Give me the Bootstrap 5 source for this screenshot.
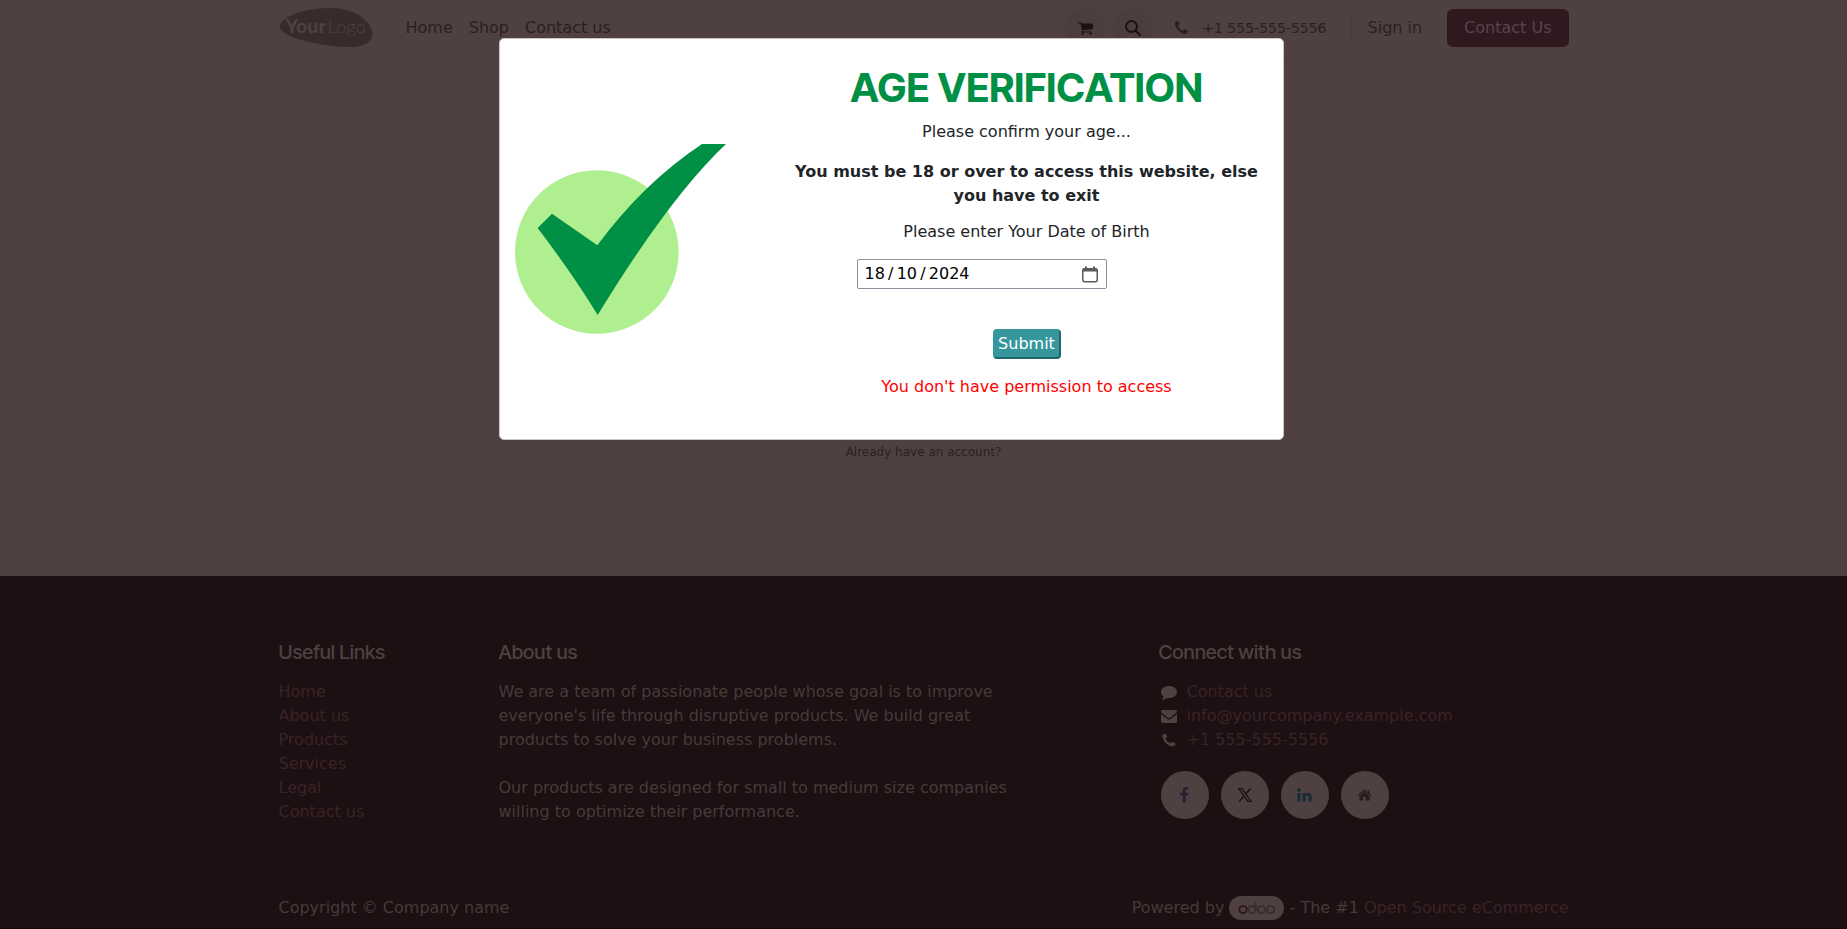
<!DOCTYPE html>
<html lang="en-GB">
<head>
<meta charset="utf-8">
<meta name="viewport" content="width=device-width, initial-scale=1">
<title>Age Verification</title>
<link href="https://cdn.jsdelivr.net/npm/bootstrap@5.3.0/dist/css/bootstrap.min.css" rel="stylesheet">
<style>
  :root { --page: #4f4141; --ink: #2d1e20; --foot: #1c1012; --foot-link: #3a2328; --foot-text: #483a3b; }
  body { font-family: "DejaVu Sans", sans-serif; background: var(--page); color: var(--ink); }
  .container { --bs-gutter-x: 30px; }
  .row { --bs-gutter-x: 30px; }
  a { text-decoration: none; }
  svg { display: block; }
  .site-header { border-bottom: 1px solid #4b3d3e; }
  .site-header .navbar { min-height: 56px; padding: 0; }
  .site-header .nav-link { color: var(--ink); padding: 8px; }
  .logo { width: 95px; height: 40px; }
  .round-btn { width: 40px; height: 40px; background: #4c3e3f; color: #1c1012; border: 0; }
  .phone { font-size: 14px; color: var(--ink); }
  .phone svg { margin-left: 6px; margin-right: 14px; }
  .btn-signin { color: var(--ink); border-color: #4b3d3e; --bs-btn-padding-x: 16px; }
  .btn-contact { background: #30181f; color: #57454a; --bs-btn-padding-x: 16px; }
  .account-link { font-size: 12px; color: var(--ink); }
  main { padding-bottom: 115px; }
  .site-footer { background: var(--foot); color: var(--foot-text); }
  .site-footer a { color: var(--foot-link); }
  .footer-main { padding-top: 64px; padding-bottom: 56px; }
  .site-footer h5 { font-family: "Inter Tight", "Inter Display", Inter, sans-serif; font-variation-settings: "opsz" 32; font-size: 20px; line-height: 24px; margin-bottom: 16px; color: #4f4141; }
  .contact-list svg { color: #4f4141; width: 20px; }
  .social { gap: 12px; margin-left: 2px; padding-top: 19px; }
  .social a { width: 48px; height: 48px; background: var(--page); }
  .copyright { border-bottom: 1px solid #120a0b; }
  .odoo { background: var(--page); width: 55px; height: 24px; }
  .age-overlay { position: absolute; top: 38px; left: 0; right: 64px; }
  .age-box { width: 785px; max-width: 100%; min-height: 402px; border: 1px solid #cac6c6; border-radius: 5px; background: #fff; color: #212529; }
  .age-art { width: 270px; padding-left: 15px; }
  .age-form { padding-top: 25px; }
  .age-box h1 { font-family: "Inter Tight", "Inter Display", Inter, sans-serif; font-variation-settings: "opsz" 32; font-size: 40px; line-height: 48px; font-weight: 700; color: #009045; }
  .age-form label { margin-bottom: 15px; }
  .dob { width: 250px; height: 30px; padding: 0 8px 0 7px; border: 1px solid #8f8f9d; border-radius: 2px; background: #fff; }
  .dob input { width: 160px; border: 0; padding: 0; outline: 0; color: #000; background: transparent; }
  .dob-row { padding-right: 90px; margin-bottom: 40px; }
  .submit { width: 68px; height: 30px; padding: 0; border: 2px solid #35979c; border-right-color: #226569; border-bottom-color: #226569; border-radius: 4px; background: #35979c; color: #fff; }
  .denied { color: #f00; }
</style>
</head>
<body class="d-flex flex-column min-vh-100 position-relative">
<header class="site-header">
  <div class="container">
    <nav class="navbar navbar-expand">
      <a class="me-4" href="#" aria-label="Your Logo">
        <svg class="logo" viewBox="0 0 96 41"><path d="M0 19C1 9 25 0 53 0C76 0 95 13 95 27C95 36 86 40 71 40C43 40 0 30 0 19Z" fill="#392a2b"/><text x="6" y="26" font-family="Lato" font-size="20" font-weight="900" fill="#4f4141">Your</text><text x="49" y="26" font-family="Lato" font-size="19" font-weight="300" fill="#4f4141">Logo</text></svg>
      </a>
      <div class="navbar-nav me-auto">
        <a class="nav-link" href="#">Home</a><a class="nav-link" href="#">Shop</a><a class="nav-link" href="#">Contact us</a>
      </div>
      <div class="d-flex align-items-center">
        <button class="round-btn rounded-circle d-flex align-items-center justify-content-center p-0 me-2" aria-label="Cart"><svg width="15" height="16" viewBox="0 0 1664 1792" fill="currentColor"><path d="M640 1536q0 52-38 90t-90 38-90-38-38-90 38-90 90-38 90 38 38 90zm896 0q0 52-38 90t-90 38-90-38-38-90 38-90 90-38 90 38 38 90zm128-1088v512q0 24-16.500 42.500t-40.500 21.500l-1044 122q13 60 13 70 0 16-24 64h920q26 0 45 19t19 45-19 45-45 19h-1024q-26 0-45-19t-19-45q0-11 8-31.500t16-36 21.500-40 15.500-29.500l-177-823h-204q-26 0-45-19t-19-45 19-45 45-19h256q16 0 28.500 6.500t19.500 15.500 13 24.500 8 26 5.500 29.500 4.500 26h1201q26 0 45 19t19 45z"/></svg></button>
        <button class="round-btn rounded-circle d-flex align-items-center justify-content-center p-0 me-3" aria-label="Search"><svg width="16" height="16" viewBox="0 0 16 16" fill="none" stroke="currentColor" stroke-width="2"><circle cx="6.500" cy="6.500" r="5.500"/><path d="M10.500 10.500L15 15" stroke-linecap="round"/></svg></button>
        <a class="phone d-flex align-items-center me-4" href="tel:+15555555556"><svg width="13" height="14" viewBox="0 192 1408 1408" fill="currentColor"><path d="M1408 1240q0 27-10 70.500t-21 68.500q-21 50-122 106-94 51-186 51-27 0-53-3.500t-57.500-12.500-47-14.500-55.500-20.500-49-18q-98-35-175-83-127-79-264-216t-216-264q-48-77-83-175-3-9-18-49t-20.500-55.500-14.500-47-12.500-57.500-3.500-53q0-92 51-186 56-101 106-122 25-11 68.500-21t70.500-10q14 0 21 3 18 6 53 76 11 19 30 54t35 63.500 31 53.500q3 4 17.500 25t21.500 35.500 7 28.500q0 20-28.500 50t-62 55-62 53-28.500 46q0 9 5 22.500t8.500 20.500 14 24 11.500 19q76 137 174 235t235 174q2 1 19 11.500t24 14 20.500 8.500 22.500 5q18 0 46-28.500t53-62 55-62 50-28.500q14 0 28.500 7t35.500 21.500 25 17.500q25 15 53.500 31t63.500 35 54 30q70 35 76 53 3 7 3 21z"/></svg>+1 555-555-5556</a>
        <button class="btn btn-signin me-2">Sign in</button>
        <button class="btn btn-contact">Contact Us</button>
      </div>
    </nav>
  </div>
</header>

<main class="flex-grow-1 d-flex flex-column justify-content-end align-items-center">
  <a class="account-link" href="#">Already have an account?</a>
</main>

<footer class="site-footer">
  <div class="container footer-main">
    <div class="row">
      <div class="col-2">
        <h5>Useful Links</h5>
        <ul class="list-unstyled mb-0">
          <li><a href="#">Home</a></li><li><a href="#">About us</a></li><li><a href="#">Products</a></li><li><a href="#">Services</a></li><li><a href="#">Legal</a></li><li><a href="#">Contact us</a></li>
        </ul>
      </div>
      <div class="col-5">
        <h5>About us</h5>
        <p class="mb-4">We are a team of passionate people whose goal is to improve everyone's life through disruptive products. We build great products to solve your business problems.</p>
        <p class="mb-0">Our products are designed for small to medium size companies willing to optimize their performance.</p>
      </div>
      <div class="col-4 offset-1">
        <h5>Connect with us</h5>
        <ul class="contact-list list-unstyled mb-0">
          <li class="d-flex align-items-center"><svg class="me-2" height="16" viewBox="0 0 20 16" fill="currentColor"><path d="M10 2C14.500 2 18 4.500 18 8S14.500 14 10 14L8 13.900C6.500 15 5 15.700 2.800 15.800C3.700 14.900 4.300 13.900 4.400 12.600C2.900 11.400 2 9.800 2 8C2 4.500 5.500 2 10 2Z"/></svg><a href="#">Contact us</a></li>
          <li class="d-flex align-items-center"><svg class="me-2" height="16" viewBox="0 0 20 16" fill="currentColor"><path d="M2 3.500C2 2.700 2.700 2 3.500 2H16.500C17.300 2 18 2.700 18 3.500C18 5 13 8 10 10.300C7 8 2 5 2 3.500ZM2 6C4 8 7 9.600 8.500 10.900Q10 12 11.500 10.900C13 9.600 16 8 18 6V13.500Q18 15 16.500 15H3.500Q2 15 2 13.500Z"/></svg><a href="#">info@yourcompany.example.com</a></li>
          <li class="d-flex align-items-center"><svg class="me-2" height="13" viewBox="0 192 1408 1408" fill="currentColor"><path d="M1408 1240q0 27-10 70.500t-21 68.500q-21 50-122 106-94 51-186 51-27 0-53-3.500t-57.500-12.500-47-14.500-55.500-20.500-49-18q-98-35-175-83-127-79-264-216t-216-264q-48-77-83-175-3-9-18-49t-20.500-55.500-14.500-47-12.500-57.500-3.500-53q0-92 51-186 56-101 106-122 25-11 68.500-21t70.500-10q14 0 21 3 18 6 53 76 11 19 30 54t35 63.500 31 53.500q3 4 17.500 25t21.500 35.500 7 28.500q0 20-28.500 50t-62 55-62 53-28.500 46q0 9 5 22.500t8.500 20.500 14 24 11.500 19q76 137 174 235t235 174q2 1 19 11.500t24 14 20.500 8.500 22.500 5q18 0 46-28.500t53-62 55-62 50-28.500q14 0 28.500 7t35.500 21.500 25 17.500q25 15 53.500 31t63.500 35 54 30q70 35 76 53 3 7 3 21z"/></svg><a href="tel:+15555555556">+1 555-555-5556</a></li>
        </ul>
        <div class="social d-flex">
          <a class="rounded-circle d-flex align-items-center justify-content-center" href="#" aria-label="Facebook"><svg width="9" height="16" viewBox="0 0 9 16"><path d="M8.500 .1V2.600H7Q5.600 2.600 5.600 3.900V5.700H8.400L8 8.500H5.600V15.600H2.700V8.500H.2V5.700H2.700V3.600Q2.700 0 6.300 0Z" fill="#27202f"/></svg></a>
          <a class="rounded-circle d-flex align-items-center justify-content-center" href="#" aria-label="X"><svg width="14" height="14" viewBox="0 0 14 14"><path d="M.8.600H4L13 13.400H9.800Z" fill="none" stroke="#1c1012" stroke-width="1.200"/><path d="M12.500.500L7.700 6M6 8L1.200 13.500" stroke="#1c1012" stroke-width="1.300"/></svg></a>
          <a class="rounded-circle d-flex align-items-center justify-content-center" href="#" aria-label="LinkedIn"><svg width="15" height="14" viewBox="0 0 15 14" fill="#182939"><circle cx="1.900" cy="2" r="1.800"/><path d="M.4 5H3.500V13.500H.4ZM5.500 5H8.500V6.200C10.500 3.900 14.600 4.500 14.600 8.500V13.500H11.500V9C11.500 6.800 8.600 6.800 8.600 9V13.500H5.500Z"/></svg></a>
          <a class="rounded-circle d-flex align-items-center justify-content-center" href="#" aria-label="Home page"><svg width="15" height="12" viewBox="0 0 16 13" fill="#291b1d"><path d="M8 3L13.500 7.500V12.500H9.500V8.700H6.500V12.500H2.500V7.500Z"/><path d="M1 7L8 1.200L15 7M12.700 4.500V1" fill="none" stroke="#291b1d" stroke-width="1.400"/></svg></a>
        </div>
      </div>
    </div>
  </div>
  <div class="copyright pt-3 pb-2">
    <div class="container d-flex justify-content-between">
      <span>Copyright © Company name</span>
      <span class="d-flex">Powered by&nbsp;<a class="odoo rounded-pill d-flex align-items-center justify-content-center" href="#" aria-label="Odoo"><svg width="38" height="14" viewBox="0 0 38 14" fill="none" stroke="#3a2d2e" stroke-width="2"><circle cx="5" cy="8.500" r="3.600" stroke="#30181f"/><circle cx="14" cy="8.500" r="3.600"/><path d="M17.600 9V1"/><circle cx="23.500" cy="8.500" r="3.600"/><circle cx="32.700" cy="8.500" r="3.600"/></svg></a>&nbsp;- The #1&nbsp;<a href="#">Open Source eCommerce</a></span>
    </div>
  </div>
</footer>

<div class="age-overlay d-flex justify-content-center">
  <section class="age-box d-flex" role="dialog" aria-labelledby="age-title">
    <div class="age-art flex-shrink-0 d-flex align-items-center">
      <svg width="211" height="190" viewBox="75 342 633 570"><circle cx="320.500" cy="666" r="245.500" fill="#afef8f"/><path d="M143 594L186 551L322 646Q459 460 636 342H708Q540 500 323 855Q250 735 143 594Z" fill="#009045"/></svg>
    </div>
    <div class="age-form flex-grow-1 text-center px-3">
      <h1 id="age-title" class="mb-2">AGE VERIFICATION</h1>
      <p class="mb-3">Please confirm your age...</p>
      <p class="fw-bold mb-2 pb-1">You must be 18 or over to access this website, else you have to exit</p>
      <form>
        <label class="d-block" for="dob">Please enter Your Date of Birth</label>
        <div class="dob-row d-flex justify-content-center">
          <div class="dob d-flex align-items-center justify-content-between">
            <input type="text" id="dob" inputmode="numeric" value="18&#8201;/&#8201;10&#8201;/&#8201;2024">
            <svg width="16" height="17" viewBox="0 0 16 17" fill="none" stroke="#5b5b5f"><rect x=".75" y="2.750" width="14.500" height="13" rx="2" stroke-width="1.500"/><path d="M1 4H15" stroke-width="3"/><path d="M4 .5V3M12 .5V3" stroke-width="2"/></svg>
          </div>
        </div>
        <button class="submit" type="button">Submit</button>
      </form>
      <p class="denied mt-3 mb-0">You don't have permission to access</p>
    </div>
  </section>
</div>
<script src="https://cdn.jsdelivr.net/npm/bootstrap@5.3.0/dist/js/bootstrap.bundle.min.js"></script>
</body>
</html>
